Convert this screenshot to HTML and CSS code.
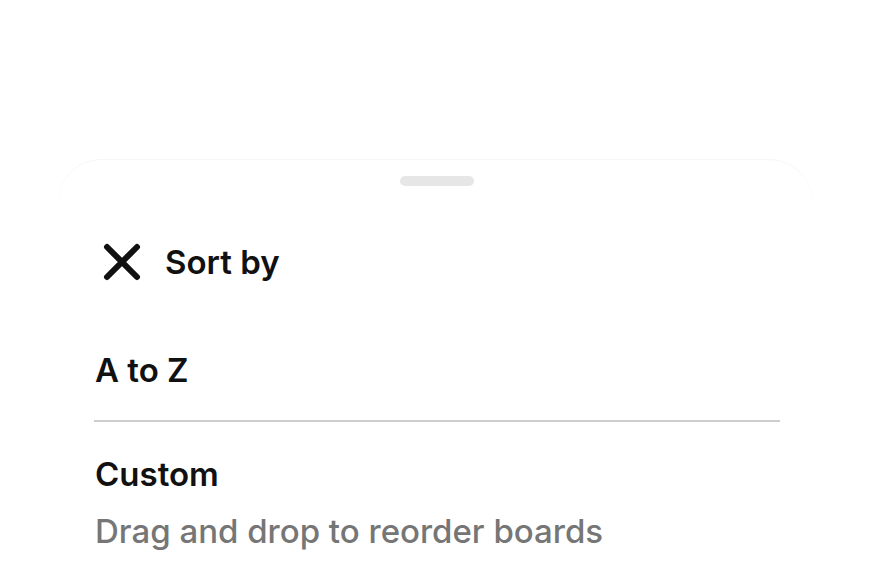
FILE: index.html
```html
<!DOCTYPE html>
<html lang="en">
<head>
    <meta charset="UTF-8">
    <meta name="viewport" content="width=device-width, initial-scale=1.0">
    <title>Sort by</title>
    <link rel="stylesheet" href="styles.css">
</head>
<body>

<div class="sheet">
    <!-- Drag handle -->
    <div class="handle"></div>

    <!-- Header -->
    <div class="sheet-header">
        <button type="button" class="close-btn" aria-label="Close">
            <svg width="38" height="38" viewBox="0 0 38 38">
                <path d="M4 4 L34 34 M34 4 L4 34" stroke="#111" stroke-width="6" stroke-linecap="round" fill="none"/>
            </svg>
        </button>
        <h2 class="sheet-title">Sort by</h2>
    </div>

    <!-- Options -->
    <div class="option option-divided">
        <div class="option-label">A to Z</div>
    </div>
    <div class="option">
        <div class="option-label">Custom</div>
        <div class="option-desc">Drag and drop to reorder boards</div>
    </div>
</div>

</body>
</html>
```

FILE: styles.css
```css
body {
    font-family: 'Inter', 'Liberation Sans', sans-serif;
    margin: 0;
    background-color: #fff;
    color: #111;
}

.sheet {
    width: 755px;
    margin: 160px 0 0 58px;
    padding: 16px 33px 0 36px;
    box-sizing: border-box;
    height: 416px;
    border-radius: 44px 44px 0 0;
    box-shadow: 0 -1px 1px rgba(0, 0, 0, 0.04);
}

.handle {
    width: 74px;
    height: 10px;
    margin: 0 auto;
    border-radius: 5px;
    background-color: #e6e6e6;
}

.sheet-header {
    display: flex;
    align-items: center;
    gap: 24px;
    margin: 57px 0 37px;
}

.close-btn {
    background: none;
    border: none;
    padding: 0;
    margin-left: 9px;
    width: 38px;
    height: 38px;
    cursor: pointer;
}

.sheet-title {
    margin: 0;
    font-size: 33px;
    font-weight: 600;
    line-height: 38px;
}

.option {
    padding: 32px 0 30px 1px;
}

.option-divided {
    border-bottom: 2px solid #cdcdcd;
}

.option-label {
    font-size: 33px;
    font-weight: 600;
    line-height: 40px;
}

.option-desc {
    margin-top: 17px;
    font-size: 33px;
    font-weight: 500;
    color: #767676;
    line-height: 40px;
}
```
